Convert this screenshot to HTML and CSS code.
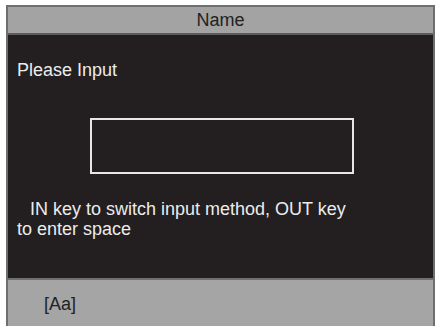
FILE: index.html
```html
<!DOCTYPE html>
<html>
<head>
<meta charset="utf-8">
<link rel="stylesheet" href="styles.css">
</head>
<body>
<div class="frame">
  <div class="header">Name</div>
  <div class="content">
    <div class="prompt">Please Input</div>
    <div class="inputbox"></div>
    <div class="hint">IN key to switch input method, OUT key<br><span class="second">to enter space</span></div>
  </div>
  <div class="footer">[Aa]</div>
</div>
</body>
</html>
```
FILE: styles.css
```css
html, body {
  margin: 0;
  padding: 0;
  background: #ffffff;
  height: 326px;
  overflow: hidden;
}
body {
  font-family: "Liberation Sans", Arial, sans-serif;
  font-size: 18px;
}
.frame {
  margin: 5px 0 0 6px;
  width: 425px;
  height: 321px;
  border: 2px solid #6e6e6e;
  border-bottom: none;
  display: flex;
  flex-direction: column;
}
.header {
  height: 26px;
  line-height: 26px;
  background: #a3a3a3;
  color: #222222;
  text-align: center;
  border-bottom: 2px solid #5c5c5c;
}
.content {
  height: 218px;
  background: #231f20;
  color: #ececec;
  padding: 25px 0 0 9px;
  line-height: 20px;
}
.prompt {
  height: 20px;
}
.inputbox {
  margin: 38px 0 0 73px;
  width: 260px;
  height: 52px;
  border: 2px solid #e6e6e6;
}
.hint {
  margin-top: 25px;
  text-indent: 13px;
}
.second {
  display: inline-block;
  text-indent: 0;
}
.footer {
  flex: 1;
  background: #a5a5a5;
  color: #222222;
  border-top: 2px solid #707070;
  padding: 14px 0 0 36px;
  line-height: 20px;
}
```
